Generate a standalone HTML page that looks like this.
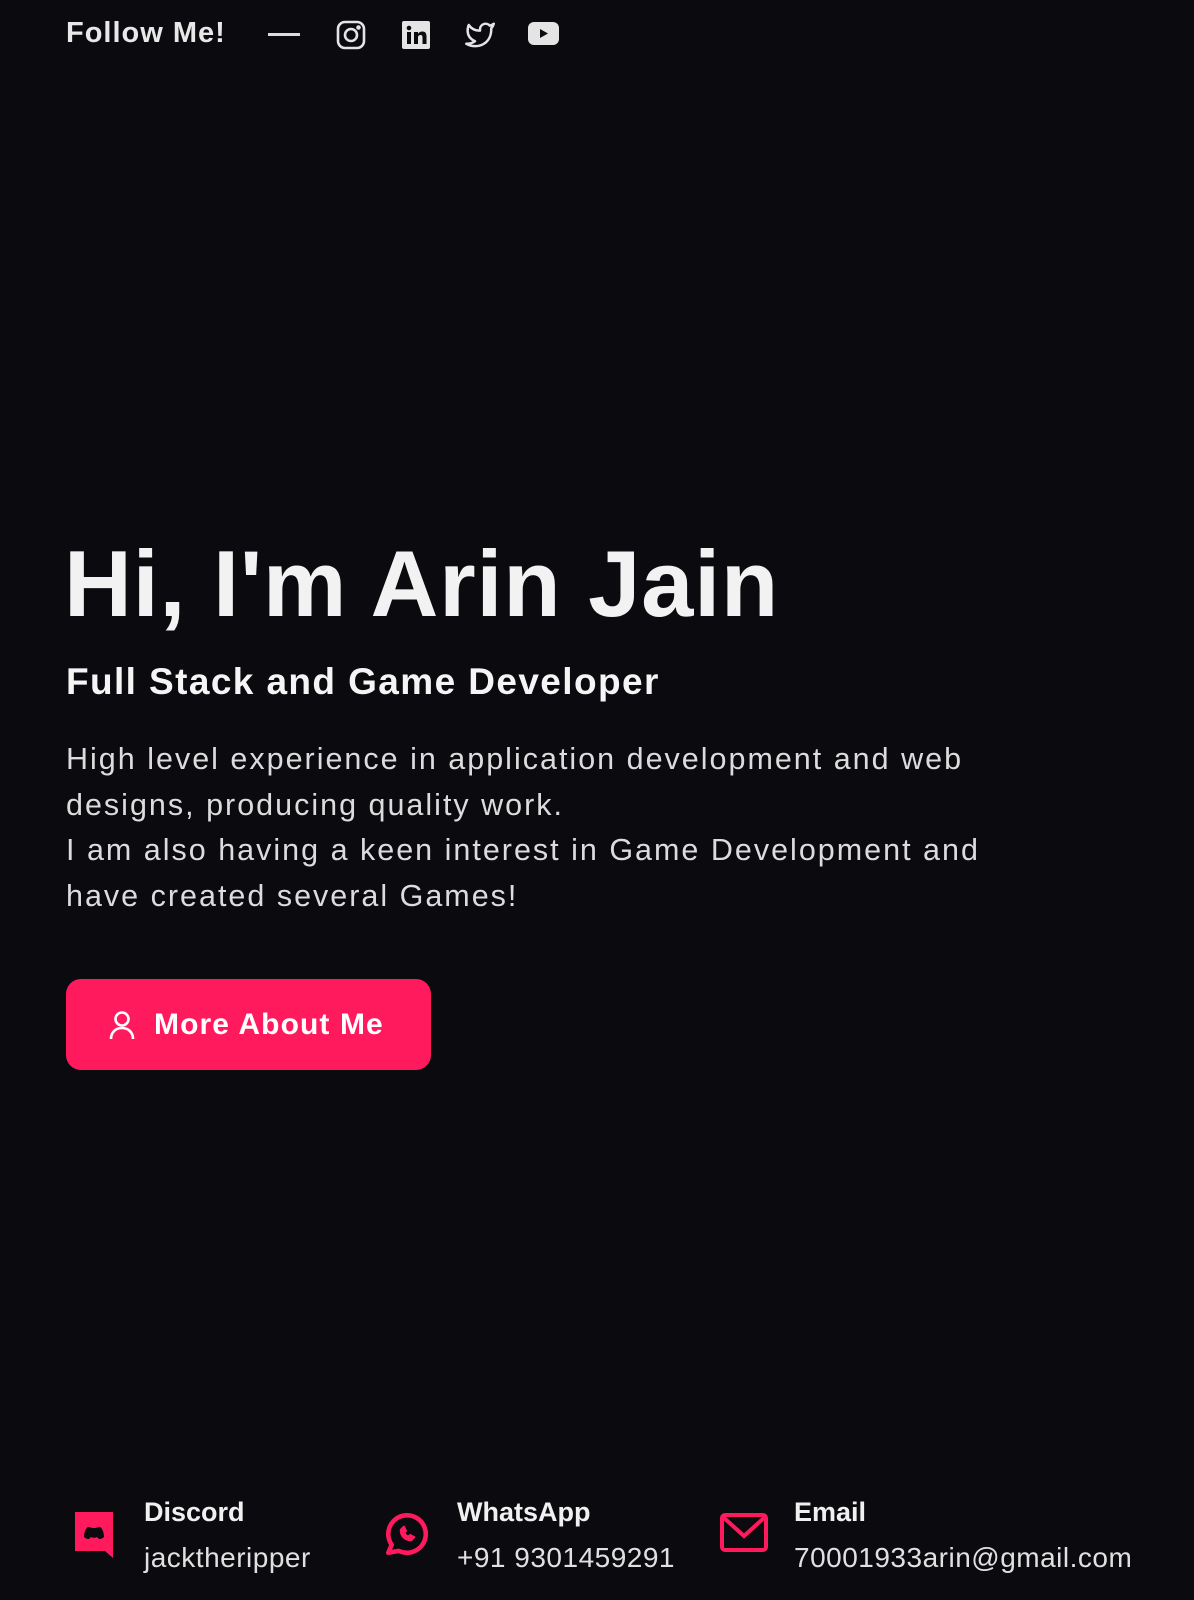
<!DOCTYPE html>
<html><head><meta charset="utf-8"><style>
*{margin:0;padding:0;box-sizing:border-box}
body{width:1194px;height:1600px;background:#0a0a0f;color:#f0f0f0;font-family:"Liberation Sans",sans-serif;position:relative;overflow:hidden}
.abs{position:absolute}
.top{left:66px;top:17px;font-size:29px;font-weight:bold;color:#e8e8e8;letter-spacing:1px}
h1{position:absolute;left:64px;top:530px;font-size:94px;font-weight:bold;letter-spacing:0.7px;color:#f2f2f2;white-space:nowrap}
h2{position:absolute;left:66px;top:661px;font-size:37px;font-weight:bold;color:#f5f5f5;white-space:nowrap;letter-spacing:1.4px}
p{position:absolute;left:66px;top:737px;font-size:30.5px;line-height:45.5px;color:#dcdcdc;width:960px;letter-spacing:2px}
.btn{left:66px;top:979px;width:365px;height:91px;background:#ff1a5e;border-radius:15px;color:#fff;font-size:30px;font-weight:bold;display:flex;align-items:center;padding-left:42px;gap:18px;letter-spacing:1.1px}
.lbl{font-size:27px;font-weight:bold;color:#f0f0f0}
.val{font-size:28px;color:#e0e0e0;margin-top:14px;letter-spacing:0.5px}
</style></head><body>
<div class="abs top">Follow Me!</div>
<div class="abs" style="left:268px;top:33px;width:32px;height:3px;background:#ddd"></div>
<svg class="abs" style="left:336px;top:20px" width="30" height="30" viewBox="0 0 30 30" fill="none" stroke="#e4e4e4" stroke-width="2.6"><rect x="2" y="2" width="26" height="26" rx="7"/><circle cx="15" cy="15" r="6"/><circle cx="22.5" cy="7.5" r="1" fill="#e4e4e4"/></svg>
<svg class="abs" style="left:401px;top:20px" width="30" height="30" viewBox="0 0 30 30"><rect x="1" y="1" width="28" height="28" rx="2" fill="#e4e4e4"/><rect x="6" y="12" width="4" height="12" fill="#0a0a0f"/><circle cx="8" cy="8" r="2.3" fill="#0a0a0f"/><path d="M13 24V12h4v2c1-2 3-2.5 4.5-2.5 3 0 4 2 4 5V24h-4v-6.5c0-1.5-.5-2.5-2-2.5s-2.5 1-2.5 2.5V24z" fill="#0a0a0f"/></svg>
<svg class="abs" style="left:464px;top:20px" width="32" height="30" viewBox="0 0 24 24" fill="none" stroke="#e4e4e4" stroke-width="2" stroke-linejoin="round"><path d="M23 3a10.9 10.9 0 0 1-3.14 1.53 4.48 4.48 0 0 0-7.86 3v1A10.66 10.66 0 0 1 3 4s-4 9 5 13a11.64 11.64 0 0 1-7 2c9 5 20 0 20-11.5a4.5 4.5 0 0 0-.08-.83A7.72 7.72 0 0 0 23 3z"/></svg>
<svg class="abs" style="left:527px;top:21px" width="33" height="26" viewBox="0 0 33 26"><rect x="1" y="1" width="31" height="23" rx="6" fill="#e4e4e4"/><path d="M13 8l8 4.5-8 4.5z" fill="#0a0a0f"/></svg>
<h1>Hi, I'm Arin Jain</h1>
<h2>Full Stack and Game Developer</h2>
<p>High level experience in application development and web designs, producing quality work.<br>I am also having a keen interest in Game Development and have created several Games!</p>
<div class="abs btn"><svg width="28" height="30" viewBox="0 0 28 30" fill="none" stroke="#fff" stroke-width="2.6"><circle cx="14" cy="9" r="6.5"/><path d="M3 29c0-7 5-11 11-11s11 4 11 11"/></svg>More About Me</div>
<svg class="abs" style="left:72px;top:1510px" width="44" height="50" viewBox="0 0 44 50"><path d="M3 2h38v46l-8-7H3z" fill="#ff1a5e"/><path d="M12 27c0-6 3-10 4-10 2 0 3 1 6 1s4-1 6-1c1 0 4 4 4 10-2 2-4 2-5 2l-2-2c-2 1-4 1-6 0l-2 2c-1 0-3 0-5-2z" fill="#0a0a0f"/></svg>
<svg class="abs" style="left:382px;top:1508px" width="50" height="52" viewBox="0 0 24 24" fill="none" stroke="#ff1a5e" stroke-width="2.2" stroke-linejoin="round"><path d="M3 21l1.65-3.8a9 9 0 1 1 3.4 2.9z"/><path d="M9 10c0 3 2 5 5 5l1.5-1.5-2-1-1 .8c-.8-.4-1.5-1.2-1.8-1.8l.8-1-1-2z" fill="#ff1a5e" stroke-width="1"/></svg>
<svg class="abs" style="left:720px;top:1513px" width="48" height="40" viewBox="0 0 48 40" fill="none" stroke="#ff1a5e" stroke-width="4"><rect x="2" y="2" width="44" height="35" rx="3"/><path d="M3 4l21 19 21-19"/></svg>
<div class="abs" style="left:144px;top:1497px"><div class="lbl">Discord</div><div class="val">jacktheripper</div></div>
<div class="abs" style="left:457px;top:1497px"><div class="lbl">WhatsApp</div><div class="val">+91 9301459291</div></div>
<div class="abs" style="left:794px;top:1497px"><div class="lbl">Email</div><div class="val">70001933arin@gmail.com</div></div>
</body></html>
